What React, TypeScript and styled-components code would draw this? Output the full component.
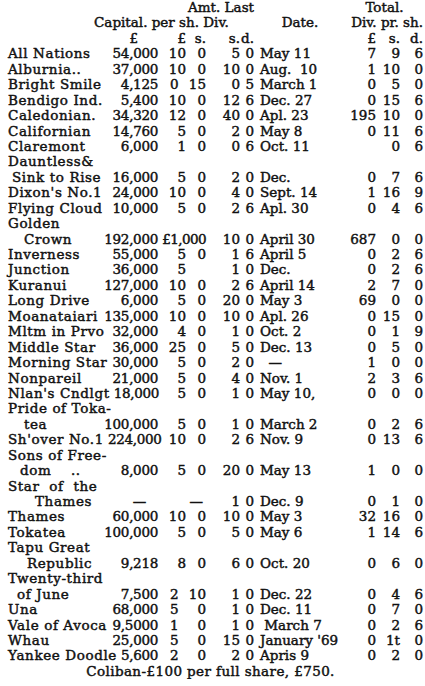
import { createGlobalStyle } from "styled-components";
import styled from "styled-components";

interface shareRow {
    name: string;
    indent?: number;
    capital?: string;
    amtL?: string;
    amtS?: string;
    amtWhole?: string;
    divS?: string;
    divD?: string;
    date?: string;
    totL?: string;
    totS?: string;
    totD?: string;
    loose?: boolean;
}

// name only lines are the first half of a wrapped company name
const ROWS: shareRow[] = [
    { name: "All Nations", capital: "54,000", amtL: "10", amtS: "0", divS: "5", divD: "0", date: "May 11", totL: "7", totS: "9", totD: "6" },
    { name: "Alburnia..", capital: "37,000", amtL: "10", amtS: "0", divS: "10", divD: "0", date: "Aug.  10", totL: "1", totS: "10", totD: "0" },
    { name: "Bright Smile", capital: "4,125", amtL: "0", amtS: "15", divS: "0", divD: "5", date: "March 1", totL: "0", totS: "5", totD: "0", loose: true },
    { name: "Bendigo Ind.", capital: "5,400", amtL: "10", amtS: "0", divS: "12", divD: "6", date: "Dec. 27", totL: "0", totS: "15", totD: "6" },
    { name: "Caledonian.", capital: "34,320", amtL: "12", amtS: "0", divS: "40", divD: "0", date: "Apl. 23", totL: "195", totS: "10", totD: "0" },
    { name: "Californian", capital: "14,760", amtL: "5", amtS: "0", divS: "2", divD: "0", date: "May 8", totL: "0", totS: "11", totD: "6" },
    { name: "Claremont", capital: "6,000", amtL: "1", amtS: "0", divS: "0", divD: "6", date: "Oct. 11", totS: "0", totD: "6" },
    { name: "Dauntless&" },
    { name: "Sink to Rise", indent: 4, capital: "16,000", amtL: "5", amtS: "0", divS: "2", divD: "0", date: "Dec.", totL: "0", totS: "7", totD: "6" },
    { name: "Dixon's No.1", capital: "24,000", amtL: "10", amtS: "0", divS: "4", divD: "0", date: "Sept. 14", totL: "1", totS: "16", totD: "9" },
    { name: "Flying Cloud", capital: "10,000", amtL: "5", amtS: "0", divS: "2", divD: "6", date: "Apl. 30", totL: "0", totS: "4", totD: "6" },
    { name: "Golden" },
    { name: "Crown", indent: 16, capital: "192,000", amtWhole: "£1,000", divS: "10", divD: "0", date: "April 30", totL: "687", totS: "0", totD: "0" },
    { name: "Inverness", capital: "55,000", amtL: "5", amtS: "0", divS: "1", divD: "6", date: "April 5", totL: "0", totS: "2", totD: "6" },
    { name: "Junction", capital: "36,000", amtL: "5", divS: "1", divD: "0", date: "Dec.", totL: "0", totS: "2", totD: "6" },
    { name: "Kuranui", capital: "127,000", amtL: "10", amtS: "0", divS: "2", divD: "6", date: "April 14", totL: "2", totS: "7", totD: "0" },
    { name: "Long Drive", capital: "6,000", amtL: "5", amtS: "0", divS: "20", divD: "0", date: "May 3", totL: "69", totS: "0", totD: "0" },
    { name: "Moanataiari", capital: "135,000", amtL: "10", amtS: "0", divS: "10", divD: "0", date: "Apl. 26", totL: "0", totS: "15", totD: "0" },
    { name: "Mltm in Prvo", capital: "32,000", amtL: "4", amtS: "0", divS: "1", divD: "0", date: "Oct. 2", totL: "0", totS: "1", totD: "9" },
    { name: "Middle Star", capital: "36,000", amtL: "25", amtS: "0", divS: "5", divD: "0", date: "Dec. 13", totL: "0", totS: "5", totD: "0" },
    { name: "Morning Star", capital: "30,000", amtL: "5", amtS: "0", divS: "2", divD: "0", date: "\u00a0\u00a0\u2014", totL: "1", totS: "0", totD: "0" },
    { name: "Nonpareil", capital: "21,000", amtL: "5", amtS: "0", divS: "4", divD: "0", date: "Nov. 1", totL: "2", totS: "3", totD: "6" },
    { name: "Nlan's Cndlgt", capital: "18,000", amtL: "5", amtS: "0", divS: "1", divD: "0", date: "May 10,", totL: "0", totS: "0", totD: "0" },
    { name: "Pride of Toka-" },
    { name: "tea", indent: 16, capital: "100,000", amtL: "5", amtS: "0", divS: "1", divD: "0", date: "March 2", totL: "0", totS: "2", totD: "6" },
    { name: "Sh'over No.1", capital: "224,000", amtL: "10", amtS: "0", divS: "2", divD: "6", date: "Nov. 9", totL: "0", totS: "13", totD: "6" },
    { name: "Sons of Free-" },
    { name: "dom    ..", indent: 12, capital: "8,000", amtL: "5", amtS: "0", divS: "20", divD: "0", date: "May 13", totL: "1", totS: "0", totD: "0" },
    { name: "Star  of  the" },
    { name: "Thames", indent: 27, capital: "\u2014\u00a0\u00a0\u00a0", amtWhole: "\u2014\u00a0", divS: "1", divD: "0", date: "Dec. 9", totL: "0", totS: "1", totD: "0" },
    { name: "Thames", capital: "60,000", amtL: "10", amtS: "0", divS: "10", divD: "0", date: "May 3", totL: "32", totS: "16", totD: "0" },
    { name: "Tokatea", capital: "100,000", amtL: "5", amtS: "0", divS: "5", divD: "0", date: "May 6", totL: "1", totS: "14", totD: "6" },
    { name: "Tapu Great" },
    { name: "Republic", indent: 19, capital: "9,218", amtL: "8", amtS: "0", divS: "6", divD: "0", date: "Oct. 20", totL: "0", totS: "6", totD: "0" },
    { name: "Twenty-third" },
    { name: "of June", indent: 9, capital: "7,500", amtL: "2", amtS: "10", divS: "1", divD: "0", date: "Dec. 22", totL: "0", totS: "4", totD: "6", loose: true },
    { name: "Una", capital: "68,000", amtL: "5", amtS: "0", divS: "1", divD: "0", date: "Dec. 11", totL: "0", totS: "7", totD: "0", loose: true },
    { name: "Vale of Avoca", capital: "9,5000", amtL: "1", amtS: "0", divS: "1", divD: "0", date: "\u00a0March 7", totL: "0", totS: "2", totD: "6", loose: true },
    { name: "Whau", capital: "25,000", amtL: "5", amtS: "0", divS: "15", divD: "0", date: "January '69", totL: "0", totS: "1t", totD: "0", loose: true },
    { name: "Yankee Doodle", capital: "5,600", amtL: "2", amtS: "0", divS: "2", divD: "0", date: "Apris 9", totL: "0", totS: "2", totD: "0", loose: true },
];

const GlobalStyle = createGlobalStyle`
    html, body {
        margin: 0;
        padding: 0;
        background: #ffffff;
    }
`;

const App = () => {
    return (
        <>
            <GlobalStyle />
            <Sheet>
                <Row>
                    <Lead />
                    <HeadCell $from={2} $span={4} $align="right">Amt. Last</HeadCell>
                    <HeadCell $from={7} $span={3} $align="center">Total.</HeadCell>
                </Row>
                <Row>
                    <HeadRun>Capital. per sh. Div.</HeadRun>
                    <HeadCell $from={6} $span={1} $align="center">Date.</HeadCell>
                    <HeadCell $from={7} $span={3} $align="right">Div. pr. sh.</HeadCell>
                </Row>
                <Row>
                    <Lead><span /><Pound>£</Pound></Lead>
                    <Num>£</Num>
                    <Num>s.</Num>
                    <Num>s.</Num>
                    <Num>d.</Num>
                    <span />
                    <Num>£</Num>
                    <Num>s.</Num>
                    <Num>d.</Num>
                </Row>
                {ROWS.map((v, i) => (
                    <Row key={i}>
                        <Lead>
                            <Name $indent={v.indent || 0}>{v.name}</Name>
                            {v.capital && <Capital>{v.capital}</Capital>}
                        </Lead>
                        {v.amtWhole ? (
                            <Whole>{v.amtWhole}</Whole>
                        ) : (
                            <>
                                <Num $loose={v.loose}>{v.amtL}</Num>
                                <Num>{v.amtS}</Num>
                            </>
                        )}
                        <Num>{v.divS}</Num>
                        <Num>{v.divD}</Num>
                        <DateCell>{v.date}</DateCell>
                        <Num>{v.totL}</Num>
                        <Num>{v.totS}</Num>
                        <Num>{v.totD}</Num>
                    </Row>
                ))}
                <Footer>Coliban-£100 per full share, £750.</Footer>
            </Sheet>
        </>
    );
};

const Sheet = styled.main`
    width: 425px;
    box-sizing: border-box;
    padding: 0 2px 0 8px;
    font-family: "DejaVu Serif", "Liberation Serif", serif;
    font-size: 13.5px;
    line-height: 15.45px;
    color: #111111;
    white-space: pre;
    -webkit-text-stroke: 0.45px #111111;
`;

const Row = styled.div`
    display: grid;
    grid-template-columns: 150px 28px 20px 34px 14px 92px 30px 24px 23px;
    height: 15.45px;
`;

const Lead = styled.div`
    display: flex;
    justify-content: space-between;
    gap: 4px;
    min-width: 0;
`;

const Name = styled.span<{ $indent: number }>`
    padding-left: ${(p) => p.$indent}px;
    letter-spacing: 0.6px;
`;

const Capital = styled.span`
    letter-spacing: -0.3px;
`;

const Pound = styled.span`
    padding-right: 20px;
`;

const Num = styled.span<{ $loose?: boolean }>`
    text-align: ${(p) => (p.$loose ? "left" : "right")};
    padding-left: ${(p) => (p.$loose ? "12px" : "0")};
`;

const Whole = styled.span`
    grid-column: span 2;
    text-align: right;
    letter-spacing: -0.6px;
`;

const DateCell = styled.span`
    padding-left: 6px;
`;

const HeadRun = styled.span`
    grid-column: 1 / span 4;
    padding-left: 86px;
`;

const HeadCell = styled.span<{ $from: number; $span: number; $align: string }>`
    grid-column: ${(p) => p.$from} / span ${(p) => p.$span};
    text-align: ${(p) => p.$align};
`;

const Footer = styled.div`
    text-align: center;
    padding-right: 10px;
    letter-spacing: 0.4px;
`;

export default App;
